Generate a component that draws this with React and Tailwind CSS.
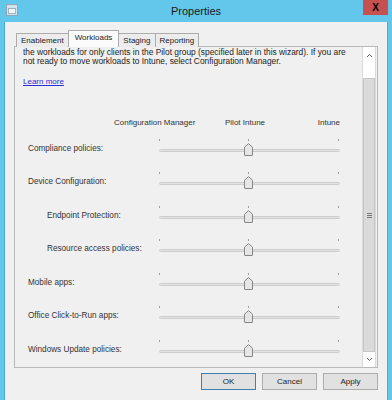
import { useState } from 'react'

const rows = [
  { label: 'Compliance policies:', indent: false },
  { label: 'Device Configuration:', indent: false },
  { label: 'Endpoint Protection:', indent: true },
  { label: 'Resource access policies:', indent: true },
  { label: 'Mobile apps:', indent: false },
  { label: 'Office Click-to-Run apps:', indent: false },
  { label: 'Windows Update policies:', indent: false },
]

function Slider() {
  return (
    <div className="relative h-full w-[181px]">
      <div className="absolute left-0 top-[9px] h-[2px] w-px bg-[#a0a0a0]" />
      <div className="absolute left-[89px] top-[9px] h-[2px] w-px bg-[#a0a0a0]" />
      <div className="absolute left-[179px] top-[9px] h-[2px] w-px bg-[#a0a0a0]" />
      <div className="absolute left-0 right-0 top-[19px] h-[3px] rounded-full border border-[#cdcdcd] bg-[#e2e2e2]" />
      <svg className="absolute left-[85px] top-[13px]" width="9" height="13" viewBox="0 0 9 13">
        <path
          d="M0.5 12 V4.2 L4.5 0.6 L8.5 4.2 V12 Q8.5 12.5 8 12.5 H1 Q0.5 12.5 0.5 12 Z"
          fill="#e6e6e6"
          stroke="#858585"
          strokeWidth="1"
        />
      </svg>
    </div>
  )
}

function Chevron({ down }) {
  return (
    <svg width="7" height="5" viewBox="0 0 7 5" className={down ? '' : 'rotate-180'}>
      <path d="M1 1 L3.5 3.5 L6 1" fill="none" stroke="#606060" strokeWidth="1" />
    </svg>
  )
}

export default function App() {
  const [tab, setTab] = useState('Workloads')
  const tabs = ['Enablement', 'Workloads', 'Staging', 'Reporting']

  return (
    <div className="flex h-[400px] w-[392px] flex-col overflow-hidden bg-[#62c7ea] font-['Liberation_Sans',Arial,sans-serif] text-[#222]">
      <div className="relative flex h-[22px] shrink-0 items-center justify-center">
        <svg className="absolute left-[6px] top-[4px]" width="12" height="12" viewBox="0 0 12 12">
          <rect x="0.5" y="0.5" width="11" height="11" fill="#cfe4ee" stroke="#8fa6b3" />
          <rect x="2.5" y="4.5" width="7" height="5" fill="#eef6fa" stroke="#9fb3bf" />
        </svg>
        <span className="text-[11px] text-[#1a1a1a]">Properties</span>
        <div className="absolute right-[4px] top-0 flex h-[15px] w-[25px] items-center justify-center bg-[#c75050] text-[10px] font-bold text-black">
          X
        </div>
      </div>

      <div className="mx-[4px] flex flex-1 flex-col border-x border-[#48aed3] bg-[#f0f0f0] pl-[9px] pr-[9px] pt-[9px]">
        <div className="relative z-10 flex h-[16px] items-end pl-[2px] text-[8px]">
          {tabs.map((t) =>
            t === tab ? (
              <button
                key={t}
                onClick={() => setTab(t)}
                className="-mx-[1px] h-[17px] border border-b-0 border-[#acacac] bg-[#fbfbfb] px-[6px] pb-[3px] leading-[8px]"
              >
                {t}
              </button>
            ) : (
              <button
                key={t}
                onClick={() => setTab(t)}
                className="h-[14px] border border-b-0 border-[#acacac] bg-[#ececec] px-[4px] pt-[1px] leading-[8px] [&+&]:border-l-0"
              >
                {t}
              </button>
            )
          )}
        </div>

        <div className="-mt-px flex h-[322px] border border-[#b9b9b9] bg-[#f0f0f0]">
          <div className="flex-1 overflow-hidden text-[8px] leading-[9px]">
            <div className="pl-[8px] pt-[1px] text-[#1c1c1c]">
              <p className="whitespace-nowrap text-[8.4px]">
                the workloads for only clients in the Pilot group (specified later in this wizard). If you are
              </p>
              <p className="whitespace-nowrap text-[8.4px]">
                not ready to move workloads to Intune, select Configuration Manager.
              </p>
              <a href="#" className="mt-[11px] inline-block text-[#2b2bd6] underline">
                Learn more
              </a>
            </div>

            <div className="mt-[32px] flex whitespace-nowrap text-[#333]">
              <span className="ml-[99px] w-[80px] shrink-0">Configuration Manager</span>
              <span className="ml-[31px] w-[40px] shrink-0">Pilot Intune</span>
              <span className="ml-auto mr-[22px]">Intune</span>
            </div>

            <div className="mt-[2.5px]">
              {rows.map((r) => (
                <div key={r.label} className="grid h-[33.5px] grid-cols-[144px_181px]">
                  <span className={`mt-[14px] text-[8.2px] text-[#333] ${r.indent ? 'pl-[32px]' : 'pl-[13px]'}`}>
                    {r.label}
                  </span>
                  <Slider />
                </div>
              ))}
            </div>
          </div>

          <div className="mr-[1px] flex w-[14px] flex-col border-x border-[#dadada] bg-white">
            <div className="flex h-[16px] items-center justify-center">
              <Chevron />
            </div>
            <div className="h-[15px]" />
            <div className="flex flex-1 items-center justify-center border border-[#c6c6c6] bg-[#dadada]">
              <div className="flex flex-col gap-[1px]">
                <div className="h-px w-[5px] bg-[#777]" />
                <div className="h-px w-[5px] bg-[#777]" />
                <div className="h-px w-[5px] bg-[#777]" />
              </div>
            </div>
            <div className="flex h-[15px] items-center justify-center">
              <Chevron down />
            </div>
          </div>
        </div>

        <div className="mt-[5px] flex justify-end gap-[6px] text-[8px]">
          <button className="h-[17px] w-[55px] border border-[#3c7fb1] bg-[#e1e1e1]">OK</button>
          <button className="h-[17px] w-[55px] border border-[#adadad] bg-[#e1e1e1]">Cancel</button>
          <button className="h-[17px] w-[55px] border border-[#adadad] bg-[#e1e1e1]">Apply</button>
        </div>
      </div>
    </div>
  )
}
